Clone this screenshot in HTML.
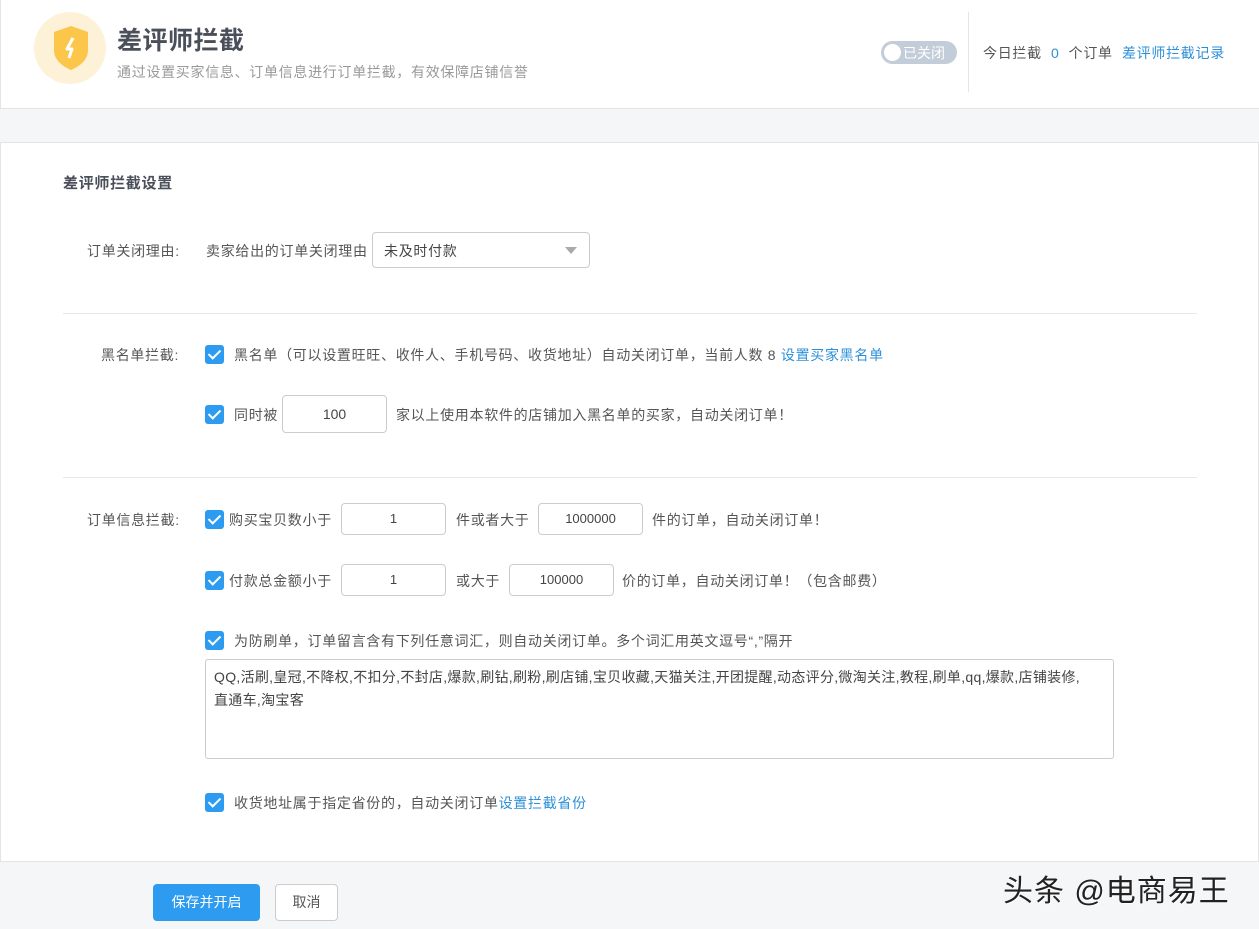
<!DOCTYPE html><html><head><meta charset="utf-8"><style>
*{margin:0;padding:0;box-sizing:border-box}
body{width:1259px;height:929px;overflow:hidden;background:#f5f6f8;font-family:"Liberation Sans","Noto Sans CJK SC",sans-serif;font-size:14px;color:#555;position:relative;letter-spacing:0.7px}
.a{position:absolute;white-space:nowrap}
.cb{position:absolute;width:19px;height:19px;background:#2d9cf0;border-radius:3px}
.cb:after{content:"";position:absolute;left:6px;top:2px;width:5px;height:10px;border:solid #fff;border-width:0 2px 2px 0;transform:rotate(45deg)}
.in{position:absolute;border:1px solid #ccc;border-radius:4px;background:#fff;text-align:center;color:#444;font-size:13px;height:32px;line-height:30px;letter-spacing:0}
.blue{color:#2d8fd8}
</style></head><body>
<div class="a" style="left:0;top:0;width:1259px;height:109px;background:#fff;border-bottom:1px solid #e4e4e4;border-left:1px solid #e4e4e4"></div>
<div class="a" style="left:34px;top:12px;width:72px;height:72px;border-radius:50%;background:#fdf1d8"></div>
<svg class="a" style="left:52px;top:24px" width="38" height="48" viewBox="0 0 38 48"><path d="M19 2 L36 8 V26 C36 36 28 42 19 46 C10 42 2 36 2 26 V8 Z" fill="#fcc64a"/><path d="M21 14 L15 25 H20 L17 34" stroke="#fff" stroke-width="3" fill="none" stroke-linejoin="round"/></svg>
<div class="a" style="left:117px;top:21px;font-size:25px;font-weight:bold;color:#4a4f5a;letter-spacing:0.5px">差评师拦截</div>
<div class="a" style="left:117px;top:62px;color:#999">通过设置买家信息、订单信息进行订单拦截，有效保障店铺信誉</div>
<div class="a" style="left:881px;top:41px;width:76px;height:23px;border-radius:12px;background:#c3ccd9"></div>
<div class="a" style="left:884px;top:44px;width:17px;height:17px;border-radius:50%;background:#fff"></div>
<div class="a" style="left:903px;top:43px;color:#fff;letter-spacing:0">已关闭</div>
<div class="a" style="left:968px;top:12px;width:1px;height:80px;background:#e4e4e4"></div>
<div class="a" style="left:983px;top:43px;color:#555">今日拦截 <span class="blue">&nbsp;0&nbsp;</span> 个订单</div>
<div class="a blue" style="left:1122px;top:43px">差评师拦截记录</div>
<div class="a" style="left:0;top:142px;width:1259px;height:720px;background:#fff;border:1px solid #e4e4e4"></div>
<div class="a" style="left:63px;top:172px;font-size:15px;font-weight:bold;color:#4a4f5a">差评师拦截设置</div>
<div class="a" style="left:87px;top:241px">订单关闭理由:</div>
<div class="a" style="left:206px;top:241px">卖家给出的订单关闭理由</div>
<div class="a" style="left:372px;top:232px;width:218px;height:36px;border:1px solid #ccc;border-radius:4px;background:#fff"></div>
<div class="a" style="left:384px;top:241px;color:#444">未及时付款</div>
<div class="a" style="left:565px;top:247px;border:6px solid transparent;border-top:7px solid #aaa"></div>
<div class="a" style="left:63px;top:313px;width:1134px;height:1px;background:#e8e8e8"></div>
<div class="a" style="left:101px;top:345px">黑名单拦截:</div>
<div class="cb" style="left:205px;top:345px"></div>
<div class="a" style="left:234px;top:345px">黑名单（可以设置旺旺、收件人、手机号码、收货地址）自动关闭订单，当前人数 8 <span class="blue">设置买家黑名单</span></div>
<div class="cb" style="left:205px;top:405px"></div>
<div class="a" style="left:234px;top:405px">同时被</div>
<div class="in" style="left:282px;top:395px;width:105px;height:38px;line-height:36px;font-size:14px">100</div>
<div class="a" style="left:396px;top:405px">家以上使用本软件的店铺加入黑名单的买家，自动关闭订单！</div>
<div class="a" style="left:63px;top:477px;width:1134px;height:1px;background:#e8e8e8"></div>
<div class="a" style="left:87px;top:510px">订单信息拦截:</div>
<div class="cb" style="left:205px;top:510px"></div>
<div class="a" style="left:229px;top:510px">购买宝贝数小于</div>
<div class="in" style="left:341px;top:503px;width:105px">1</div>
<div class="a" style="left:456px;top:510px">件或者大于</div>
<div class="in" style="left:538px;top:503px;width:105px">1000000</div>
<div class="a" style="left:652px;top:510px">件的订单，自动关闭订单！</div>
<div class="cb" style="left:205px;top:571px"></div>
<div class="a" style="left:229px;top:571px">付款总金额小于</div>
<div class="in" style="left:341px;top:564px;width:105px">1</div>
<div class="a" style="left:456px;top:571px">或大于</div>
<div class="in" style="left:509px;top:564px;width:105px">100000</div>
<div class="a" style="left:622px;top:571px">价的订单，自动关闭订单！（包含邮费）</div>
<div class="cb" style="left:205px;top:631px"></div>
<div class="a" style="left:234px;top:631px">为防刷单，订单留言含有下列任意词汇，则自动关闭订单。多个词汇用英文逗号“,”隔开</div>
<div class="a" style="left:205px;top:659px;width:909px;height:100px;border:1px solid #ccc;border-radius:3px;background:#fff;white-space:normal;padding:6px 8px;line-height:23px;color:#444;letter-spacing:0.3px">QQ,活刷,皇冠,不降权,不扣分,不封店,爆款,刷钻,刷粉,刷店铺,宝贝收藏,天猫关注,开团提醒,动态评分,微淘关注,教程,刷单,qq,爆款,店铺装修,<br>直通车,淘宝客</div>
<div class="cb" style="left:205px;top:793px"></div>
<div class="a" style="left:234px;top:793px">收货地址属于指定省份的，自动关闭订单<span class="blue">设置拦截省份</span></div>
<div class="a" style="left:153px;top:884px;width:107px;height:37px;background:#2d9cf0;border-radius:4px;color:#fff;text-align:center;line-height:37px;letter-spacing:0">保存并开启</div>
<div class="a" style="left:275px;top:884px;width:63px;height:37px;border:1px solid #ccc;background:#fff;border-radius:4px;text-align:center;line-height:35px;letter-spacing:0">取消</div>
<div class="a" style="left:1003px;top:866px;font-size:30px;color:#222;letter-spacing:1px;text-shadow:1px 1px 0 #fff">头条 @电商易王</div>
</body></html>
